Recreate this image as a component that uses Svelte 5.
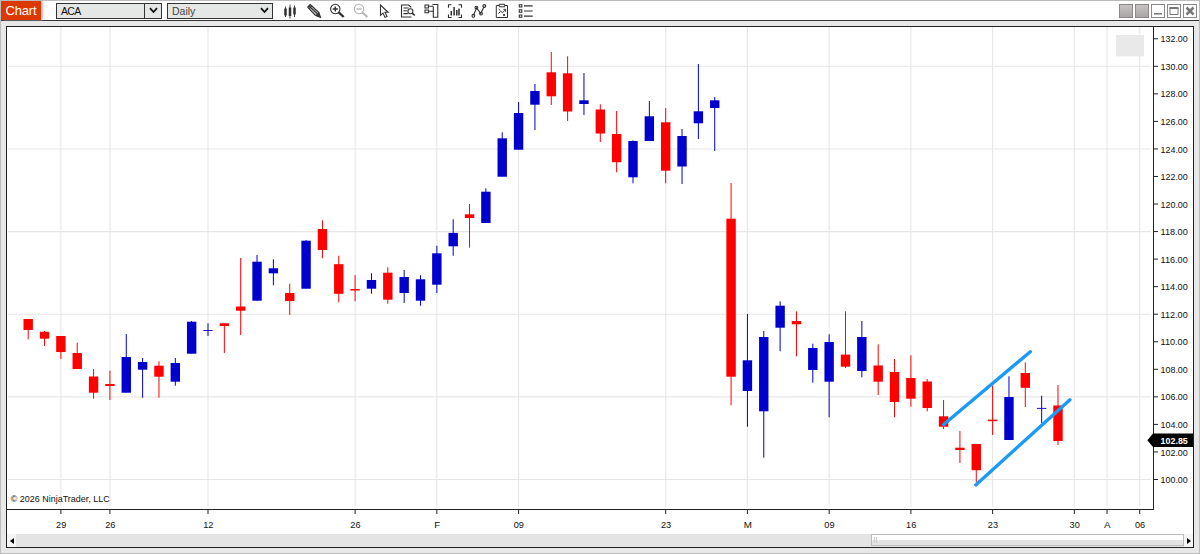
<script>
	const step = 16.346;
	const firstX = 28.2;
	const barX = (i) => firstX + i * step;
	const priceY = (price) => 66.3 + (130 - price) * 13.773;

	// direction, high, body top, body bottom, low
	const candles = [
		['down', 319, 319, 330, 339.3],
		['down', 331, 331.8, 338.7, 346],
		['down', 336, 336, 352, 359],
		['down', 342.7, 353, 369, 369],
		['down', 369, 376.5, 392.7, 398.7],
		['down', 370.7, 384, 386, 400],
		['up', 334, 357, 392.7, 392.7],
		['up', 358, 362, 369.7, 397.7],
		['down', 361.3, 365.7, 376.7, 397.7],
		['up', 358, 363, 381.7, 385.7],
		['up', 321, 321.7, 353.7, 353.7],
		['up', 323.3, 330, 330.9, 336],
		['down', 323.3, 323.3, 326, 353],
		['down', 258, 306.5, 310.7, 335],
		['up', 255, 261.7, 300.7, 300.7],
		['up', 259.3, 268.3, 273.3, 285.3],
		['down', 283.7, 293, 301, 315],
		['up', 240, 240.7, 288.7, 288.7],
		['down', 220.3, 229, 250, 258.3],
		['down', 255.7, 264.2, 293.8, 302.3],
		['down', 275, 289, 290.5, 301.3],
		['up', 273.3, 280, 288.7, 293.7],
		['down', 267.3, 272.7, 299.7, 303.7],
		['up', 270, 277, 293, 303],
		['up', 275.3, 279.3, 300.7, 305.7],
		['up', 245.7, 253.3, 284.7, 293],
		['up', 219.3, 232.9, 246.3, 255.7],
		['down', 204, 214.3, 218, 247.7],
		['up', 188.3, 191.7, 223, 223],
		['up', 132.3, 138.3, 176.7, 176.7],
		['up', 102, 113, 149.7, 149.7],
		['up', 84, 91, 104.7, 130],
		['down', 52, 72.3, 96.3, 105],
		['down', 56.3, 73.3, 111.5, 121],
		['up', 73, 100.3, 104, 115],
		['down', 104.3, 109.5, 133.5, 142],
		['down', 111, 134, 162.2, 172.3],
		['up', 140.3, 141, 177.3, 183.3],
		['up', 101, 116.3, 141, 141],
		['down', 108, 122.3, 170.7, 183.3],
		['up', 129, 136, 166.5, 184],
		['up', 64, 111.3, 123.3, 139],
		['up', 97, 100.3, 108, 151],
		['down', 183, 218.7, 376.7, 405.3],
		['up', 314, 360.3, 391, 426.7],
		['up', 331, 337, 411.3, 457.7],
		['up', 301.3, 305.7, 327.7, 351.3],
		['down', 311.3, 321, 324.3, 356.3],
		['up', 343.7, 348, 370, 382.7],
		['up', 334.3, 342, 381.7, 417.3],
		['down', 311.3, 354.6, 366.7, 368],
		['up', 321, 337, 371, 377.3],
		['down', 344.3, 365.5, 381.7, 395],
		['down', 359, 372, 402, 417.3],
		['down', 355.3, 378, 398.7, 406.7],
		['down', 379, 381.5, 408, 411.3],
		['down', 400, 416.3, 426.7, 429],
		['down', 431, 447.7, 450, 463],
		['down', 444, 444, 470.2, 482],
		['down', 385.3, 419.6, 421.2, 435],
		['up', 376.3, 397, 440, 440],
		['down', 362.3, 373, 387.8, 407],
		['up', 395.7, 407.9, 408.8, 423.3],
		['down', 385, 405.5, 441, 445]
	];

	const dates = [
		[2, '29'], [5, '26'], [11, '12'], [20, '26'], [25, 'F'], [30, '09'], [39, '23'],
		[44, 'M'], [49, '09'], [54, '16'], [59, '23'], [64, '30'], [66, 'A'], [68, '06']
	];

	const prices = Array.from({ length: 17 }, (_, i) => 132 - i * 2);
	const gridPrices = [130, 124, 118, 112, 106, 100];
</script>

<div class="window">
	<header class="toolbar">
		<div class="title">Chart</div>
		<div class="select symbol">
			<span>ACA</span>
			<i><svg width="9" height="7" viewBox="0 0 9 7"><path d="M1 1.2l3.5 3.8L8 1.2" /></svg></i>
		</div>
		<div class="select interval">
			<span>Daily</span>
			<i><svg width="9" height="7" viewBox="0 0 9 7"><path d="M1 1.2l3.5 3.8L8 1.2" /></svg></i>
		</div>
		<div class="tools">
			<svg viewBox="0 0 16 16"><path d="M3.5 3.5v10.5M8 1.5v14M12.5 2.5v11.5" stroke-width="0.9" /><path d="M3.5 5.5v7M8 4.5v8.5M12.5 4.5v7" stroke-width="2.5" /></svg>
			<svg viewBox="0 0 16 16"><path class="pencil" d="M1.6 4.1l2.6-2.6 8.6 7.8 1.7 5-5.3-1.9z" /><path d="M3.2 5.6l2.5-2.7M2.9 2.9l8.6 8" /><path class="solid" d="M9.2 12.4l3.6-3.1 1.8 5.2z" /></svg>
			<svg viewBox="0 0 16 16"><circle cx="6.3" cy="6" r="4.7" /><path d="M3.7 6h5.2M6.3 3.4v5.2" stroke-width="1.4" /><path d="M9.7 9.4l5 4.6" stroke-width="2.3" /></svg>
			<svg class="disabled" viewBox="0 0 16 16"><circle cx="6" cy="6" r="4.7" /><path d="M3.4 6h5.2" stroke-width="1.4" /><path d="M9.4 9.4l5 4.6" stroke-width="2.1" /></svg>
			<svg viewBox="0 0 16 16"><path d="M4.5 2v10.3L7 10.1l2 4.3 2-.9-2-4.2h3.2z" /></svg>
			<svg viewBox="0 0 16 16"><path d="M11.5 14H1.5V2h7.2l2.6 2.4M3.5 5h5M3.5 7.8h3.3M3.5 10.6h4.3" /><circle cx="10.4" cy="8.3" r="2.5" /><path d="M12.2 10.2l2.6 2.3" stroke-width="1.6" /></svg>
			<svg viewBox="0 0 16 16"><path d="M1 2h3.4v3H1zM1 7h3.4v2.7H1zM4.4 3.3H9M4.4 8.2H9M9 2V1.5h4.8v12.8H9.3V3.3" /></svg>
			<svg viewBox="0 0 16 16"><path d="M4.5 1.7h-3v3M11.5 1.7h3v3M4.5 14.5h-3v-3M11.5 14.5h3v-3" /><path d="M4.3 8v4.5M7.1 4v8.5M9.8 7v5.5M12 5.5v7" stroke-width="1.5" /></svg>
			<svg viewBox="0 0 16 16"><path d="M2.5 12.3l3.1-7.4 4.2 5.6 3.4-7" /><circle cx="2.4" cy="12.8" r="1.4" /><circle cx="5.4" cy="4.6" r="1.4" /><circle cx="10" cy="10.6" r="1.4" /><circle cx="13.3" cy="3" r="1.4" /></svg>
			<svg viewBox="0 0 16 16"><path d="M5 2.5H2.3v12h11.2v-12H11M5.3 1.3h5.4v2.5H5.3zM4.5 10.5l2.2-2.2 1.8 1.4 3-3M9.4 6.3h2.2v2.3M4.7 6l1.6 1.6M9.2 11.2l1.8 1.6M11 11.2l-1.8 1.6" stroke-width="1" /></svg>
			<svg viewBox="0 0 16 16"><path d="M1.3 1.7h2.5V4H1.3zM1.3 6.8h2.5v2.4H1.3zM1.3 12h2.5v2.3H1.3zM6 2.9h8.7M6 8h8.7M6 13.1h8.7" /></svg>
		</div>
		<div class="controls">
			<span class="filled"></span>
			<span class="filled"></span>
			<span><svg viewBox="0 0 12 12"><path d="M2 8.8h8" stroke-width="1.5" /></svg></span>
			<span><svg viewBox="0 0 12 12"><path d="M2 3v6.5h8V3" /><path d="M1.5 3h9" stroke-width="2" /></svg></span>
			<span><svg viewBox="0 0 12 12"><path d="M2.5 2.5l7 7M9.5 2.5l-7 7" stroke-width="2.5" /></svg></span>
		</div>
	</header>

	<main class="panel">
		<svg class="chart" width="1186" height="507" viewBox="7 27 1186 507">
			<g class="grid">
				{#each dates as [index]}
					<line x1={barX(index)} x2={barX(index)} y1="27" y2="507" />
				{/each}
				{#each gridPrices as price}
					<line x1="8" x2="1151" y1={priceY(price)} y2={priceY(price)} />
				{/each}
			</g>
			<rect class="badge" x="1116" y="35" width="28" height="21.3" />

			{#each candles as [direction, high, top, bottom, low], i}
				<g class={direction}>
					<line x1={barX(i)} x2={barX(i)} y1={high} y2={low} />
					<rect x={barX(i) - 4.7} y={top} width="9.4" height={bottom - top} />
				</g>
			{/each}

			<g class="trend">
				<line x1="943.7" y1="424.5" x2="1030.3" y2="351.7" />
				<line x1="975.8" y1="484.9" x2="1070" y2="399.8" />
			</g>

			<g class="axis">
				<path d="M7 509.5H1153.5M1153.5 27V510" />
				{#each dates as [index, label]}
					<line x1={barX(index)} x2={barX(index)} y1="510" y2="514" />
					<text
						x={barX(index) + 0.3}
						y="528"
						text-anchor="middle"
						textLength={label.length > 1 ? 10.2 : undefined}
						lengthAdjust="spacingAndGlyphs">{label}</text>
				{/each}
				{#each prices as price}
					<line x1="1154" x2="1158" y1={priceY(price)} y2={priceY(price)} />
					<text x="1160.5" y={priceY(price) + 3.6} textLength="27.3" lengthAdjust="spacingAndGlyphs">{price.toFixed(2)}</text>
				{/each}
			</g>

			<path class="marker" d="M1147.3 440.3l5.7-6.8h40v13.6h-40z" />
			<text class="last" x="1160.6" y="444" textLength="27.2" lengthAdjust="spacingAndGlyphs">102.85</text>
			<text x="10.7" y="501.8" textLength="99" lengthAdjust="spacingAndGlyphs">© 2026 NinjaTrader, LLC</text>
		</svg>

		<div class="scrollbar">
			<span class="arrow"><svg width="4" height="6" viewBox="0 0 4 6"><path d="M4 0v6L0 3z" /></svg></span>
			<div class="track"><div class="thumb"><i></i><i></i></div></div>
			<span class="arrow"><svg width="4" height="6" viewBox="0 0 4 6"><path d="M0 0v6l4-3z" /></svg></span>
		</div>
	</main>
</div>

<style>
	:global(body) {
		margin: 0;
		overflow: hidden;
	}

	.window {
		box-sizing: border-box;
		width: 1200px;
		height: 554px;
		display: flex;
		flex-direction: column;
		border: 1px solid #bcbcbc;
		background: #e8e8e8;
		font-family: "Liberation Sans", Arial, sans-serif;
		color: #111;
	}

	.toolbar {
		box-sizing: border-box;
		height: 20px;
		display: flex;
		align-items: center;
		background: #fff;
		border-bottom: 1px solid #333;
	}

	.title {
		width: 40px;
		height: 19px;
		background: #dc3900;
		color: #fff;
		font-size: 13px;
		letter-spacing: -0.2px;
		line-height: 20px;
		text-align: center;
		box-shadow: 2px 0 2px #bbb;
	}

	.select {
		box-sizing: border-box;
		height: 16px;
		display: flex;
		align-items: stretch;
		border: 1px solid #333;
		background: #e5e7e7;
		font-size: 10.5px;
		line-height: 15px;
	}

	.select span {
		flex: 1;
		padding-left: 4px;
	}

	.select i {
		width: 16px;
		display: flex;
		align-items: center;
		justify-content: center;
	}

	.select path {
		fill: none;
		stroke: #111;
		stroke-width: 1.8;
	}

	.symbol {
		width: 106px;
		margin-left: 15px;
		letter-spacing: -0.7px;
	}

	.symbol i {
		border-left: 1px solid #333;
	}

	.interval {
		width: 106px;
		margin-left: 5px;
		color: #444;
	}

	.tools {
		display: flex;
		gap: 7.6px;
		margin-left: 9px;
	}

	.tools svg {
		width: 16px;
		height: 16px;
		fill: none;
		stroke: #303030;
		stroke-width: 1.1;
	}

	.tools .pencil {
		fill: #b5b5b5;
	}

	.tools .solid {
		fill: #333;
		stroke: none;
	}

	.tools .disabled {
		stroke: #b5b5b5;
	}

	.controls {
		display: flex;
		gap: 2px;
		margin-left: auto;
		margin-right: 2px;
	}

	.controls span {
		box-sizing: border-box;
		width: 14px;
		height: 14px;
		display: flex;
		border: 1px solid #8c8888;
		background: #fff;
	}

	.controls .filled {
		background: linear-gradient(#c9c5c5, #aaa5a5);
	}

	.controls svg {
		width: 12px;
		height: 12px;
		fill: none;
		stroke: #777;
		stroke-width: 1;
	}

	.panel {
		box-sizing: border-box;
		width: 1188px;
		height: 522px;
		margin: 5px 0 0 5px;
		border: 1px solid #222;
		background: #fff;
	}

	.chart {
		display: block;
		font-size: 9.8px;
	}

	.chart text {
		fill: #111;
	}

	.grid line {
		stroke: #e7e7e7;
		stroke-width: 1.1;
	}

	.badge {
		fill: #e9e9e9;
	}

	.up rect {
		fill: #0000cd;
	}

	.up line {
		stroke: #0000cd;
	}

	.down rect {
		fill: #f00;
	}

	.down line {
		stroke: #f00;
	}

	.trend line {
		stroke: #1b9bf5;
		stroke-width: 3.4;
		stroke-linecap: round;
	}

	.axis path,
	.axis line {
		fill: none;
		stroke: #222;
	}

	.marker {
		fill: #000;
	}

	.chart .last {
		fill: #fff;
		font-weight: bold;
	}

	.scrollbar {
		height: 13px;
		display: flex;
		background: #f5f5f5;
	}

	.arrow {
		width: 9px;
		display: flex;
		align-items: center;
		justify-content: center;
	}

	.track {
		flex: 1;
		display: flex;
		justify-content: flex-end;
		background: #e4e4e4;
	}

	.thumb {
		box-sizing: border-box;
		width: 313px;
		height: 12px;
		display: flex;
		gap: 1px;
		padding: 2px;
		border: 1px solid #bbb;
		background: linear-gradient(#fff 45%, #e4e4e4 55%);
	}

	.thumb i {
		width: 1px;
		background: #ccc;
	}
</style>
